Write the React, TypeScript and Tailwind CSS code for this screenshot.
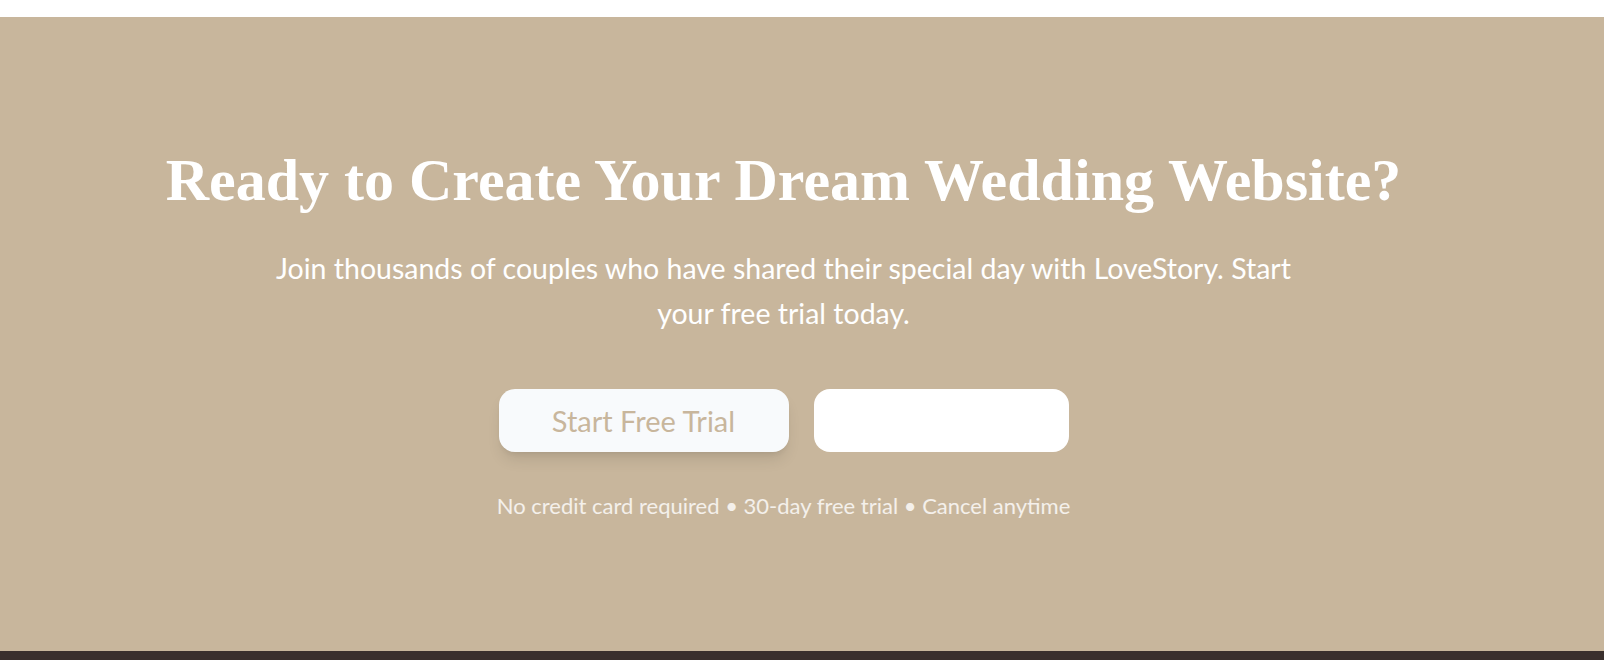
export default function App() {
  return (
    <div className="min-h-screen bg-white" style={{ fontFamily: 'Lato, "Noto Sans", sans-serif' }}>
      <div className="h-[17px] bg-white" />
      <section className="h-[634px] bg-[#c8b69c] pl-6 pr-[61px] pt-[126px]">
        <div className="mx-auto flex max-w-[1280px] flex-col items-center text-center">
          <h2
            className="text-[60px] font-bold leading-[75px] text-white"
            style={{ fontFamily: '"Liberation Serif", "DejaVu Serif", serif' }}
          >
            Ready to Create Your Dream Wedding Website?
          </h2>
          <p className="mt-[28px] max-w-[1030px] text-[28.5px] leading-[45px] text-white">
            Join thousands of couples who have shared their special day with LoveStory. Start your free trial today.
          </p>
          <div className="mt-[53px] flex items-center gap-[25px]">
            <button className="h-[63px] w-[290px] rounded-2xl bg-slate-50 text-[29px] text-[#c8b69c] shadow-lg">
              Start Free Trial
            </button>
            <button className="h-[63px] w-[255px] rounded-2xl bg-white text-[29px] text-white">
              View Examples
            </button>
          </div>
          <p className="mt-[37px] text-[22px] leading-[33px] text-white/80">
            No credit card required • 30-day free trial • Cancel anytime
          </p>
        </div>
      </section>
      <footer className="h-[200px] bg-[#3a2f2d]" />
    </div>
  );
}
